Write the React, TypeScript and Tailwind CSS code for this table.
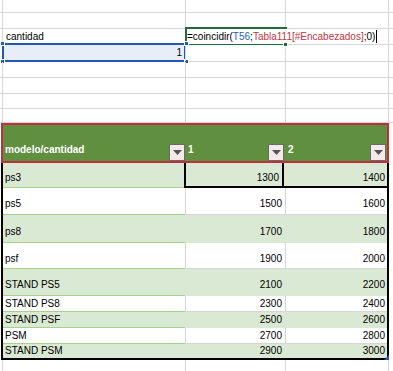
import React from "react";

const grid = "border-[#d6d6d6]";
const font = { fontFamily: '"Liberation Sans", Arial, sans-serif' };

// top (empty) sheet rows, height includes the bottom gridline
const topRows = [13, 16, 16, 17, 16, 16, 15, 14];

type DataRow = { name: string; b: number; c: number; h: string; band: boolean; tall: boolean };

const rows: DataRow[] = [
  { name: "ps3", b: 1300, c: 1400, h: "h-[25px]", band: true, tall: true },
  { name: "ps5", b: 1500, c: 1600, h: "h-[27px]", band: false, tall: true },
  { name: "ps8", b: 1700, c: 1800, h: "h-[28px]", band: true, tall: true },
  { name: "psf", b: 1900, c: 2000, h: "h-[26px]", band: false, tall: true },
  { name: "STAND PS5", b: 2100, c: 2200, h: "h-[27px]", band: true, tall: true },
  { name: "STAND PS8", b: 2300, c: 2400, h: "h-[16px]", band: false, tall: false },
  { name: "STAND PSF", b: 2500, c: 2600, h: "h-[16px]", band: true, tall: false },
  { name: "PSM", b: 2700, c: 2800, h: "h-[16px]", band: false, tall: false },
  { name: "STAND PSM", b: 2900, c: 3000, h: "h-[14px]", band: true, tall: false },
];

const Handle = ({ className }: { className: string }) => (
  <div
    className={`absolute w-[5px] h-[5px] bg-[#2257b4] border border-white ${className}`}
  />
);

const FilterButton = () => (
  <div className="w-[16px] h-[17px] shrink-0 bg-[#f4e9e9] border border-[#6a6a6a] flex items-center justify-center">
    <svg width="9" height="5" viewBox="0 0 9 5">
      <path d="M0 0h9L4.5 5z" fill="#555" />
    </svg>
  </div>
);

const SheetRow = ({ h, index }: { h: number; index: number }) => (
  <div className={`flex pl-[2px] border-b ${grid}`} style={{ height: h }}>
    <div className={`w-[183px] border-l ${grid} relative flex items-end`}>
      {index === 2 && (
        <span className="pl-[3px] pb-[1px] text-[10px] leading-[12px] text-black">
          cantidad
        </span>
      )}
      {index === 3 && (
        <>
          <div className="w-full h-full bg-[#e7eef8] flex items-end justify-end pr-[3px]">
            <span className="text-[10px] leading-[12px] text-black pb-[2px]">1</span>
          </div>
          <div className="absolute -top-[2px] -left-[1px] -right-[1px] -bottom-[1px] border-2 border-[#2257b4]" />
          <Handle className="-top-[4px] -left-[3px]" />
          <Handle className="-bottom-[3px] -left-[3px]" />
          <Handle className="-top-[4px] -right-[4px] z-30" />
          <Handle className="-bottom-[3px] -right-[4px]" />
        </>
      )}
    </div>
    <div className={`w-[100px] border-l ${grid} relative`}>
      {index === 2 && (
        <>
          <div className="absolute -top-[2px] -left-[1px] -right-[2px] -bottom-[1px] border-2 border-[#1e6b3d]" />
          <div className="absolute -right-[3px] -bottom-[3px] w-[5px] h-[5px] bg-[#1e6b3d] border border-white z-20" />
          <div className="absolute left-[1px] top-0 h-full flex items-center z-10 whitespace-nowrap bg-white pr-[2px] text-[10px] leading-[12px] text-black">
            =coincidir(
            <span className="text-[#2e5fb3]">T56</span>;
            <span className="text-[#c3343f]">Tabla111[#Encabezados]</span>
            ;0)
            <span className="inline-block w-px h-[13px] bg-black ml-[1px]" />
          </div>
        </>
      )}
    </div>
    <div className={`w-[103px] border-l ${grid}`} />
    <div className={`flex-1 border-l ${grid}`} />
  </div>
);

export default function App() {
  return (
    <div className="w-[393px] h-[371px] bg-white overflow-hidden" style={font}>
      {topRows.map((h, i) => (
        <SheetRow key={i} h={h} index={i} />
      ))}

      <div className="ml-[1px] w-[388px]">
        {/* header */}
        <div className="h-[40px] border-2 border-[#c0303c] bg-[#5f8f3f] flex text-white font-bold text-[10px] leading-[12px]">
          <div className="w-[182px] flex items-end justify-between">
            <span className="pl-[2px] mb-[5px]">modelo/cantidad</span>
            <FilterButton />
          </div>
          <div className="w-[100px] flex items-end justify-between pr-[1px]">
            <span className="pl-[3px] mb-[5px]">1</span>
            <FilterButton />
          </div>
          <div className="flex-1 flex items-end justify-between pr-[1px]">
            <span className="pl-[3px] mb-[5px]">2</span>
            <FilterButton />
          </div>
        </div>

        {/* body */}
        <div className="relative border-l-2 border-r-2 border-b-2 border-black text-[10px] leading-[12px] text-black">
          {rows.map((r, i) => {
            const first = i === 0;
            const last = i === rows.length - 1;
            const bg = r.band ? "bg-[#dae9d3]" : "bg-white";
            const vline = r.band ? "border-[#dae9d3]" : grid;
            const rowLine = last ? "" : "border-b border-[#a8d08d]";
            const pad = r.tall ? "pt-[6px]" : "";
            return (
              <div key={r.name} className={`flex ${r.h} ${bg}`}>
                <div className={`w-[182px] flex items-center pl-[2px] ${pad} ${rowLine}`}>
                  {r.name}
                </div>
                <div
                  className={`w-[100px] flex items-center justify-end pr-[3px] ${pad} ${
                    first
                      ? "border-l-2 border-r-2 border-b-2 border-black -ml-[1px]"
                      : `border-l ${vline} ${rowLine}`
                  }`}
                >
                  {r.b}
                </div>
                <div
                  className={`flex-1 flex items-center justify-end pr-[2px] ${pad} ${
                    first
                      ? "border-b-2 border-black -ml-[1px]"
                      : `border-l ${vline} ${rowLine}`
                  }`}
                >
                  {r.c}
                </div>
              </div>
            );
          })}
          <svg className="absolute -right-[2px] -bottom-[2px]" width="5" height="5" viewBox="0 0 5 5">
            <path d="M5 0v5H0z" fill="#2a4fb0" />
          </svg>
        </div>
      </div>

      {/* empty sheet below */}
      <div className="flex pl-[2px] h-[20px]">
        <div className={`w-[183px] border-l ${grid}`} />
        <div className={`w-[100px] border-l ${grid}`} />
        <div className={`w-[103px] border-l ${grid}`} />
        <div className={`flex-1 border-l ${grid}`} />
      </div>
    </div>
  );
}
